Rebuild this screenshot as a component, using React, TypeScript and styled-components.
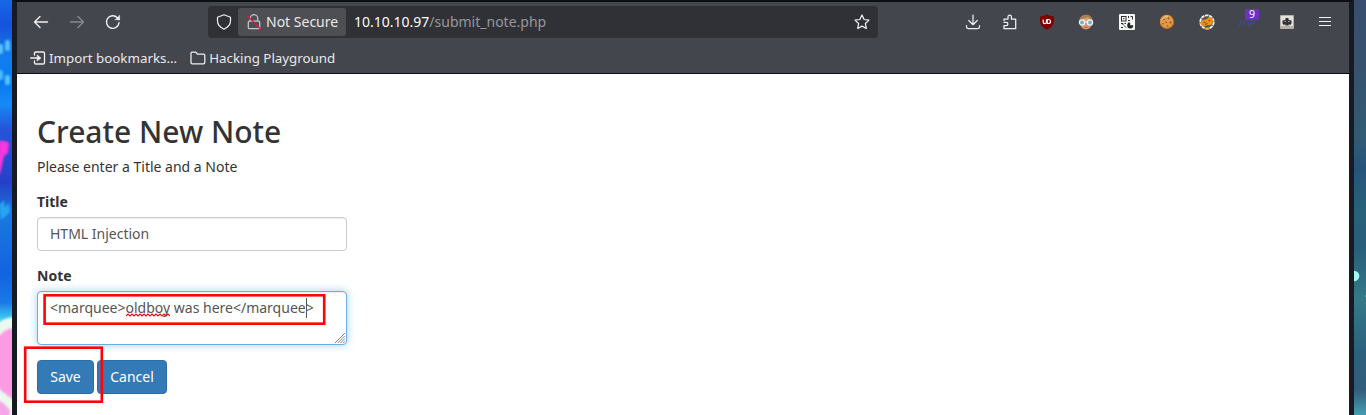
import React from "react";
import styled, { createGlobalStyle } from "styled-components";

const GlobalStyle = createGlobalStyle`
  *, *::before, *::after { box-sizing: border-box; }
  body { margin: 0; font-family: "Noto Sans", sans-serif; overflow: hidden; }
`;

const Desktop = styled.div`
  display: flex;
  width: 1366px;
  height: 415px;
  overflow: hidden;
`;

const Wallpaper = styled.svg`
  flex: none;
  display: block;
  width: 12px;
  height: 415px;
`;

const BrowserWindow = styled.div`
  flex: 1;
  display: flex;
  flex-direction: column;
  border: solid #171a21;
  border-width: 2px 5px 0;
  border-top-color: #0d0e12;
  background: #fff;
`;

const Chrome = styled.header`
  height: 72px;
  flex: none;
  background: #44464e;
  border-bottom: 1px solid #0c0c0f;
  color: #e9e9ea;
  font-size: 13.33px;
`;

const NavRow = styled.div`
  display: flex;
  align-items: center;
  height: 40px;
  padding-left: 6px;
`;

const NavButton = styled.div<{ $dim?: boolean }>`
  display: flex;
  align-items: center;
  justify-content: center;
  width: 36px;
  height: 32px;
  opacity: ${(p) => (p.$dim ? 0.4 : 1)};
`;

const AddressBar = styled.div`
  display: flex;
  align-items: center;
  width: 670px;
  height: 32px;
  margin-left: 77px;
  padding-right: 8px;
  border-radius: 4px;
  background: #303136;
  font-size: 14px;
  line-height: 20px;
`;

const ShieldSlot = styled.div`
  display: flex;
  justify-content: center;
  width: 30px;
  padding-left: 2px;
`;

const Identity = styled.div`
  display: flex;
  align-items: center;
  width: 108px;
  height: 28px;
  padding-left: 8px;
  gap: 4px;
  border-radius: 3px;
  background: #4e4f53;
  white-space: nowrap;
`;

const IdentityText = styled.span`
  padding-bottom: 1px;
`;

const Url = styled.div`
  flex: 1;
  padding: 0 0 1px 8px;
  color: #fbfbfe;
  span { color: #97979b; }
`;

const Extensions = styled.div`
  display: flex;
  align-items: center;
  margin-left: 77px;
`;

const ToolSlot = styled.div<{ $w: number }>`
  position: relative;
  display: flex;
  align-items: center;
  justify-content: center;
  width: ${(p) => p.$w}px;
  height: 32px;
`;

const Badge = styled.span`
  position: absolute;
  left: 18px;
  top: 3px;
  width: 14px;
  height: 11px;
  border-radius: 1px;
  background: #6b32c1;
  color: #fff;
  font-size: 10.5px;
  line-height: 11px;
  text-align: center;
`;

const Bookmarks = styled.div`
  display: flex;
  align-items: center;
  height: 31px;
  padding-left: 13px;
  gap: 13px;
`;

const Bookmark = styled.div`
  display: flex;
  align-items: center;
  gap: 3px;
  white-space: nowrap;
`;

const Page = styled.main`
  width: 350px;
  padding: 41px 20px 0;
  color: #333;
  font-size: 14px;
  line-height: 20px;
`;

const Heading = styled.h2`
  margin: 0 0 9px;
  font-size: 30px;
  font-weight: 500;
  line-height: 33px;
`;

const Intro = styled.p`
  margin: 0 0 15px;
`;

const Field = styled.div`
  margin-bottom: 15px;
`;

const Label = styled.label`
  display: block;
  margin-bottom: 5px;
  font-weight: 700;
`;

const Control = styled.div<{ $focused?: boolean }>`
  position: relative;
  width: 310px;
  height: ${(p) => (p.$focused ? 54 : 34)}px;
  padding: 6px 12px;
  border: 1px solid ${(p) => (p.$focused ? "#66afe9" : "#ccc")};
  border-radius: 4px;
  background: #fff;
  box-shadow: inset 0 1px 1px rgba(0, 0, 0, 0.075)${(p) =>
    p.$focused ? ", 0 0 8px rgba(102, 175, 233, 0.6)" : ""};
  color: #555;
  white-space: nowrap;
`;

const Misspelled = styled.span`
  position: relative;
`;

const Squiggle = styled.svg`
  position: absolute;
  left: 0;
  top: 15px;
  width: 44px;
  height: 4px;
`;

const Caret = styled.span`
  position: absolute;
  left: 268px;
  top: 6px;
  width: 1px;
  height: 20px;
  background: #555;
`;

const Grip = styled.svg`
  position: absolute;
  right: 1px;
  bottom: 1px;
  width: 10px;
  height: 10px;
`;

const Actions = styled.div`
  position: relative;
  display: flex;
  gap: 3px;
`;

const Button = styled.button<{ $w: number }>`
  width: ${(p) => p.$w}px;
  height: 34px;
  padding: 0;
  border: 1px solid #2e6da4;
  border-radius: 4px;
  background: #337ab7;
  color: #fff;
  font: 14px/20px "Noto Sans", sans-serif;
`;

const Outline = styled.svg`
  position: absolute;
  pointer-events: none;
`;

const SaveOutline = styled(Outline)`
  left: -14px;
  top: -15px;
  width: 82px;
  height: 60px;
`;

const NoteOutline = styled(Outline)`
  left: 5px;
  top: 1px;
  width: 284px;
  height: 34px;
`;

const Icon = ({ size = 16, w = 1.4, children }: { size?: number; w?: number; children: React.ReactNode }) => (
  <svg width={size} height={size} viewBox="0 0 16 16" fill="none" stroke="#f0f0f2" strokeWidth={w} strokeLinecap="round" strokeLinejoin="round">
    {children}
  </svg>
);

const LeftWallpaper = () => (
  <Wallpaper viewBox="0 0 12 415">
    <defs>
      <linearGradient id="sea" x1="0" y1="0" x2="0" y2="1">
        <stop offset="0" stopColor="#1668e8" />
        <stop offset=".06" stopColor="#1652db" />
        <stop offset=".14" stopColor="#127fee" />
        <stop offset=".2" stopColor="#0879f0" />
        <stop offset=".25" stopColor="#158af5" />
        <stop offset=".31" stopColor="#2555da" />
        <stop offset=".44" stopColor="#2540c8" />
        <stop offset=".52" stopColor="#1a77e0" />
        <stop offset=".66" stopColor="#1263e0" />
        <stop offset=".73" stopColor="#1a7ae8" />
        <stop offset=".77" stopColor="#45cff0" />
        <stop offset="1" stopColor="#74d3ec" />
      </linearGradient>
      <filter id="soft" x="-50%" width="200%"><feGaussianBlur stdDeviation="1" /></filter>
    </defs>
    <rect width="12" height="415" fill="url(#sea)" />
    <g filter="url(#soft)">
      <rect x="5" y="40" width="5" height="11" rx="2" fill="#57c2fb" />
      <rect x="-2" y="44" width="5" height="10" rx="2" fill="#57c2fb" />
      <rect x="-2" y="70" width="5" height="10" rx="2" fill="#4abafa" />
      <rect x="5" y="75" width="5" height="10" rx="2" fill="#57c2fb" />
      <path d="M-1 141Q5 140 9 143L8 153L4 156L0 174H-2Z" fill="#fb36df" />
      <path d="M-1 205L4 200L5 208L9 202L10 212L1 220Z" fill="#29b9f5" opacity=".75" />
      <path d="M-2 323Q4 318 14 317V420H-2Z" fill="#e9faef" />
      <path d="M-2 337Q5 328 14 328V400Q7 396 -2 388Z" fill="#fb9be4" />
      <path d="M-2 400Q4 402 10 410V420H-2Z" fill="#f5a5e8" />
    </g>
  </Wallpaper>
);

const RightWallpaper = () => (
  <Wallpaper viewBox="0 0 12 415">
    <defs>
      <linearGradient id="night" x1="0" y1="0" x2="0" y2="1">
        <stop offset="0" stopColor="#394e70" />
        <stop offset=".18" stopColor="#36536f" />
        <stop offset=".33" stopColor="#315b74" />
        <stop offset=".4" stopColor="#26547c" />
        <stop offset=".5" stopColor="#286079" />
        <stop offset=".6" stopColor="#2a5e7b" />
        <stop offset=".72" stopColor="#357989" />
        <stop offset=".85" stopColor="#2c617d" />
        <stop offset=".94" stopColor="#315d7c" />
        <stop offset="1" stopColor="#459db1" />
      </linearGradient>
      <filter id="glow"><feGaussianBlur stdDeviation="0.6" /></filter>
    </defs>
    <rect width="12" height="415" fill="url(#night)" />
    <circle cx="0" cy="276" r="5.3" fill="#9ffcf0" filter="url(#glow)" />
    <circle cx="12" cy="296" r="1.2" fill="#55a9ad" />
  </Wallpaper>
);

const UblockIcon = () => (
  <svg width="16" height="16" viewBox="0 0 16 16">
    <path d="M8 .5C6 1.8 3.8 2.2 1 2.5V7c0 4.2 3.2 6.8 7 8.7 3.8-1.9 7-4.5 7-8.7V2.5C12.2 2.2 10 1.8 8 .5Z" fill="#800004" />
    <path d="M4.2 5.5V8q0 1.6 1.6 1.6T7.5 8V5.5" fill="none" stroke="#fff" strokeWidth="1.2" />
    <path d="M8.2 5.5v4h1.3a2 2 0 0 0 0-4Z" fill="none" stroke="#fff" strokeWidth="1.2" />
  </svg>
);

const FaceIcon = () => (
  <svg width="16" height="16" viewBox="0 0 16 16">
    <ellipse cx="8" cy="8.5" rx="6" ry="7" fill="#d8946c" />
    <path d="M1.2 7C1.7 2.5 4.5.8 8 .8S14.3 2.5 14.8 7L12.5 5.5 10 3.5 4.5 5Z" fill="#a8824f" />
    <path d="M5 5 9.5 3.5 11.5 5.5V7H5Z" fill="#dba47a" />
    <circle cx="4" cy="8.5" r="2.6" fill="#7bb4c8" stroke="#edf5f6" strokeWidth="1.2" />
    <circle cx="12" cy="8.5" r="2.6" fill="#7bb4c8" stroke="#edf5f6" strokeWidth="1.2" />
    <path d="M6.5 8h3" stroke="#edf5f6" />
    <path d="M6.5 13q1.5.6 3 0" stroke="#b5654c" fill="none" />
  </svg>
);

const QrIcon = () => (
  <svg width="16" height="16" viewBox="0 0 16 16">
    <rect width="16" height="16" rx="1" fill="#f5f5f3" />
    <g fill="none" stroke="#2b2d30" strokeWidth="1">
      <rect x="2.5" y="2.5" width="4.5" height="4.5" />
      <path d="M4 4.7h1.5M9.5 2v2M9 6.5h2M11.5 2.5h2v3M2 9.5h2v1.5M5.500 9.500H7M2 13.500h2M5 11.500l2 2M9 9h1" />
    </g>
    <path d="M11.2 8.5v2.7h3A3 3 0 1 1 11.2 8.5Z" fill="#222427" />
  </svg>
);

const CookieIcon = () => (
  <svg width="16" height="16" viewBox="0 0 16 16">
    <circle cx="8" cy="8" r="7.2" fill="#b9671f" />
    <circle cx="7.6" cy="7.4" r="6.6" fill="#e09a4a" />
    <path d="M3 6q2-4 6-3.8" stroke="#f7ca82" fill="none" />
    <g fill="#8a4d20">
      <circle cx="5" cy="5.5" r=".8" /><circle cx="9.5" cy="4.4" r=".8" /><circle cx="7.3" cy="8.3" r=".8" />
      <circle cx="11.5" cy="8.5" r=".9" /><circle cx="4" cy="9.8" r=".8" /><circle cx="8.5" cy="12" r=".8" />
    </g>
  </svg>
);

const FoxIcon = () => (
  <svg width="16" height="16" viewBox="0 0 16 16">
    <circle cx="8" cy="8" r="6.7" fill="#55524d" stroke="#f4f3ef" strokeWidth="1.8" strokeDasharray="3.5 .7" />
    <path d="M1 9.5 3.5 6l4-.8L10 3l3 .5 1 3-1 3.5-2.500 1.500-2-.5-2.500 1.500-3-1Z" fill="#ed9210" />
    <path d="M5 14.300q3 1.500 6 0" stroke="#ed9210" strokeWidth="1.200" fill="none" />
    <path d="m4.500 8.200 2 .3M9.500 6.500l1.500.3M6 10.500 8.500 9.500" stroke="#754112" />
  </svg>
);

const PhpIcon = () => (
  <svg width="16" height="16" viewBox="0 0 16 16" fill="none" stroke="#404a82" strokeWidth="1.2">
    <path d="M.3 12.5 1.7 6.5h2q1.4 0 1.1 1.7T3 10.2H1M6 10.5 7.2 5M6.9 7h2q1 0 .8 1L9.2 10.5M10.8 12.5l1.4-6h2q1.4 0 1.1 1.7t-1.8 2h-2" />
  </svg>
);

const SpyIcon = () => (
  <svg width="14" height="14" viewBox="0 0 14 14">
    <rect width="14" height="14" rx="1" fill="#b4b0ac" />
    <path d="M1 1h12v10H1Z" fill="#e4e0db" />
    <path d="M5.200 5 5.700 3h2.600l.5 2 2.700.5v3l-1.500 1.700L9 9l-.5 1.500h-3L5 9l-1 1.200L2.500 8.500v-3Z" fill="#333" />
    <path d="M4.500 6.500h1.500m2 0h1.500" stroke="#aaa" />
  </svg>
);

export default function App() {
  return (
    <>
      <GlobalStyle />
      <Desktop>
        <LeftWallpaper />
        <BrowserWindow>
          <Chrome>
            <NavRow>
              <NavButton><Icon><path d="M14.5 8H1.5M7 2.5 1.5 8 7 13.5" /></Icon></NavButton>
              <NavButton $dim><Icon><path d="M1.5 8h13M9 2.5 14.5 8 9 13.5" /></Icon></NavButton>
              <NavButton><Icon><path d="M14 8.8A6.3 6.3 0 1 1 12.3 3.7L14 5.4" /><path d="M14.6 1.5v4.3h-4.3Z" fill="#f0f0f2" strokeWidth=".5" /></Icon></NavButton>
              <AddressBar>
                <ShieldSlot><Icon w={1.2}><path d="M8 .8 14.5 3.3V7q0 5.1-6.5 8.2Q1.5 12.1 1.5 7V3.3Z" /></Icon></ShieldSlot>
                <Identity>
                  <Icon w={1.25}>
                    <path d="M4.3 7V4.3a3.7 3.7 0 0 1 7.4 0V7M3.3 7h9.4q1 0 1 1v5.700q0 1-1 1H3.300q-1 0-1-1V8q0-1 1-1Z" stroke="#c6c6c8" />
                    <path d="M1.3 1.8 14.7 15.3" stroke="#df1745" strokeWidth="1.3" />
                  </Icon>
                  <IdentityText>Not Secure</IdentityText>
                </Identity>
                <Url>10.10.10.97<span>/submit_note.php</span></Url>
                <Icon w={1.25}><path d="m8 1 2.1 4.5 4.9.6-3.6 3.4.9 5L8 12.1l-4.3 2.4.9-5L1 6.1l4.9-.6Z" /></Icon>
              </AddressBar>
              <Extensions>
                <ToolSlot $w={36}><Icon w={1.25}><path d="M8 1v9.5M3.8 6.5 8 10.7l4.2-4.2M1.5 11.500v1.300q0 1.700 1.700 1.700h9.600q1.700 0 1.700-1.700v-1.300" /></Icon></ToolSlot>
                <ToolSlot $w={38}><Icon w={1.25}><path d="M2 6.5V5h4V2.7a1.7 1.7 0 0 1 3.4 0V5h4.300v9.700H2v-3h2.200a1.700 1.700 0 0 0 0-3.400H2" /></Icon></ToolSlot>
                <ToolSlot $w={36}><UblockIcon /></ToolSlot>
                <ToolSlot $w={42}><FaceIcon /></ToolSlot>
                <ToolSlot $w={39}><QrIcon /></ToolSlot>
                <ToolSlot $w={41}><CookieIcon /></ToolSlot>
                <ToolSlot $w={40}><FoxIcon /></ToolSlot>
                <ToolSlot $w={40}><PhpIcon /><Badge>9</Badge></ToolSlot>
                <ToolSlot $w={40}><SpyIcon /></ToolSlot>
                <ToolSlot $w={36}>
                  <svg width="12" height="16" viewBox="0 0 12 16"><path d="M0 3.5h12M0 7.5h12M0 11.5h12" stroke="#f3f3f5" strokeWidth="1.2" /></svg>
                </ToolSlot>
              </Extensions>
            </NavRow>
            <Bookmarks>
              <Bookmark>
                <Icon w={1.3}><path d="M4.5 5V3.3q0-1.3 1.3-1.3h7.4q1.3 0 1.3 1.3v9.4q0 1.3-1.3 1.3H5.8q-1.3 0-1.3-1.3V11M.7 8H10" /><path d="M7.5 5.3 10.7 8 7.5 10.7Z" fill="#f0f0f2" strokeWidth=".8" /></Icon>
                Import bookmarks...
              </Bookmark>
              <Bookmark>
                <Icon w={1.25}><path d="M2 2h3.5L7.7 4.2H13.500q1.300 0 1.300 1.300v7q0 1.300-1.300 1.300H2.300Q1 13.800 1 12.500V3q0-1 1-1Z" /></Icon>
                Hacking Playground
              </Bookmark>
            </Bookmarks>
          </Chrome>
          <Page>
            <Heading>Create New Note</Heading>
            <Intro>Please enter a Title and a Note</Intro>
            <Field>
              <Label>Title</Label>
              <Control>HTML Injection</Control>
            </Field>
            <Field>
              <Label>Note</Label>
              <Control $focused>
                &lt;marquee&gt;
                <Misspelled>
                  oldboy
                  <Squiggle viewBox="0 0 44 4"><path d="M0 3 2 1 4 3 6 1 8 3 10 1 12 3 14 1 16 3 18 1 20 3 22 1 24 3 26 1 28 3 30 1 32 3 34 1 36 3 38 1 40 3 42 1 44 3" stroke="#f00a12" strokeWidth="1.1" fill="none" /></Squiggle>
                </Misspelled>
                {" was here</marquee>"}
                <Caret />
                <Grip viewBox="0 0 11 11"><path d="M0 11 11 0M3 11 11 3M6 11 11 6M9 11 11 9" stroke="#777" fill="none" /></Grip>
                <NoteOutline viewBox="0 0 284 34"><rect x="1.6" y="2.3" width="279.6" height="28.4" fill="none" stroke="#fc0408" strokeWidth="2.6" /></NoteOutline>
              </Control>
            </Field>
            <Actions>
              <Button $w={57}>Save</Button>
              <Button $w={70}>Cancel</Button>
              <SaveOutline viewBox="0 0 82 60"><rect x="2.2" y="2.7" width="76.6" height="54" fill="none" stroke="#fc0408" strokeWidth="2.6" /></SaveOutline>
            </Actions>
          </Page>
        </BrowserWindow>
        <RightWallpaper />
      </Desktop>
    </>
  );
}
